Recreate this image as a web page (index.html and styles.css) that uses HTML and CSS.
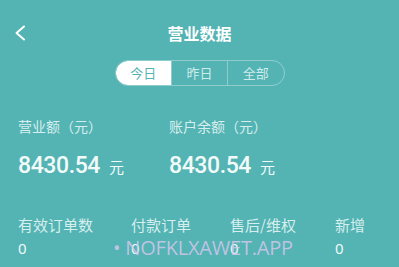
FILE: index.html
```html
<!DOCTYPE html>
<html lang="zh">
<head>
    <meta charset="UTF-8">
    <title>营业数据</title>
    <link rel="stylesheet" href="styles.css">
</head>
<body>
    <div id="page">
        <div class="header">
            <div class="back">
                <svg width="12" height="16" viewBox="0 0 12 16"><path d="M10 1.5 L2.5 8 L10 14.5" fill="none" stroke="#fff" stroke-width="2" stroke-linecap="round" stroke-linejoin="round"/></svg>
            </div>
            <div class="title">营业数据</div>
        </div>
        <div class="tabs">
            <div class="tab selected">今日</div>
            <div class="tab">昨日</div>
            <div class="tab">全部</div>
        </div>
        <div class="money">
            <div class="money-item">
                <div class="label">营业额（元）</div>
                <div class="amount">8430.54<span class="unit">元</span></div>
            </div>
            <div class="money-item">
                <div class="label">账户余额（元）</div>
                <div class="amount">8430.54<span class="unit">元</span></div>
            </div>
        </div>
        <div class="stats">
            <div class="stat s1"><div class="name">有效订单数</div><div class="num">0</div></div>
            <div class="stat s2"><div class="name">付款订单</div><div class="num">0</div></div>
            <div class="stat s3"><div class="name">售后/维权</div><div class="num">0</div></div>
            <div class="stat s4"><div class="name">新增</div><div class="num">0</div></div>
        </div>
        <div class="mark">• NOFKLXAWET.APP</div>
    </div>
</body>
</html>
```

FILE: styles.css
```css
*{
    margin: 0;
    padding: 0;
}
body{
    background: #54b3b3;
    font-family: "Noto Sans CJK SC", "Noto Sans", sans-serif;
    color: #ffffff;
}
#page{
    position: relative;
    width: 399px;
    height: 267px;
    overflow: hidden;
}
.header{
    position: relative;
    height: 44px;
}
.back{
    position: absolute;
    left: 14px;
    top: 25px;
    width: 12px;
    height: 16px;
}
.back svg{
    display: block;
}
.title{
    text-align: center;
    font-size: 16px;
    font-weight: bold;
    line-height: 22px;
    padding-top: 22px;
}
.tabs{
    display: flex;
    width: 170px;
    height: 26px;
    margin: 16px auto 0;
    border: 1px solid rgba(255,255,255,0.35);
    border-radius: 13px;
    overflow: hidden;
    box-sizing: border-box;
}
.tab{
    flex: 1;
    text-align: center;
    line-height: 24px;
    font-size: 13px;
    color: #cdeceb;
    border-left: 1px solid rgba(255,255,255,0.35);
}
.tab:first-child{
    border-left: 0;
}
.tab.selected{
    background: #ffffff;
    color: #54b3b3;
    border-radius: 12px 0 0 12px;
}
.money{
    display: flex;
    padding: 30px 0 0 18px;
}
.money-item{
    width: 151px;
}
.label{
    font-size: 14px;
    line-height: 20px;
    color: #d6efee;
}
.amount{
    margin-top: 15px;
    font-family: "Roboto", sans-serif;
    font-size: 23px;
    font-weight: 500;
    line-height: 30px;
    letter-spacing: -0.4px;
    color: #f2fbfa;
}
.unit{
    font-family: "Noto Sans CJK SC", sans-serif;
    font-size: 15px;
    font-weight: normal;
    margin-left: 9px;
}
.stats{
    display: flex;
    padding: 33px 0 0 18px;
}
.stat .name{
    font-size: 15px;
    line-height: 20px;
    color: #d6efee;
}
.stat .num{
    font-family: "Noto Sans", sans-serif;
    font-size: 15px;
    line-height: 20px;
    margin-top: 3px;
    color: #eefaf9;
}
.s1{ width: 113px; }
.s2{ width: 99px; }
.s3{ width: 105px; }
.mark{
    position: absolute;
    left: 113px;
    top: 234px;
    font-family: "Open Sans", sans-serif;
    font-size: 20px;
    color: rgba(210,200,235,0.85);
    letter-spacing: -0.2px;
}
```
